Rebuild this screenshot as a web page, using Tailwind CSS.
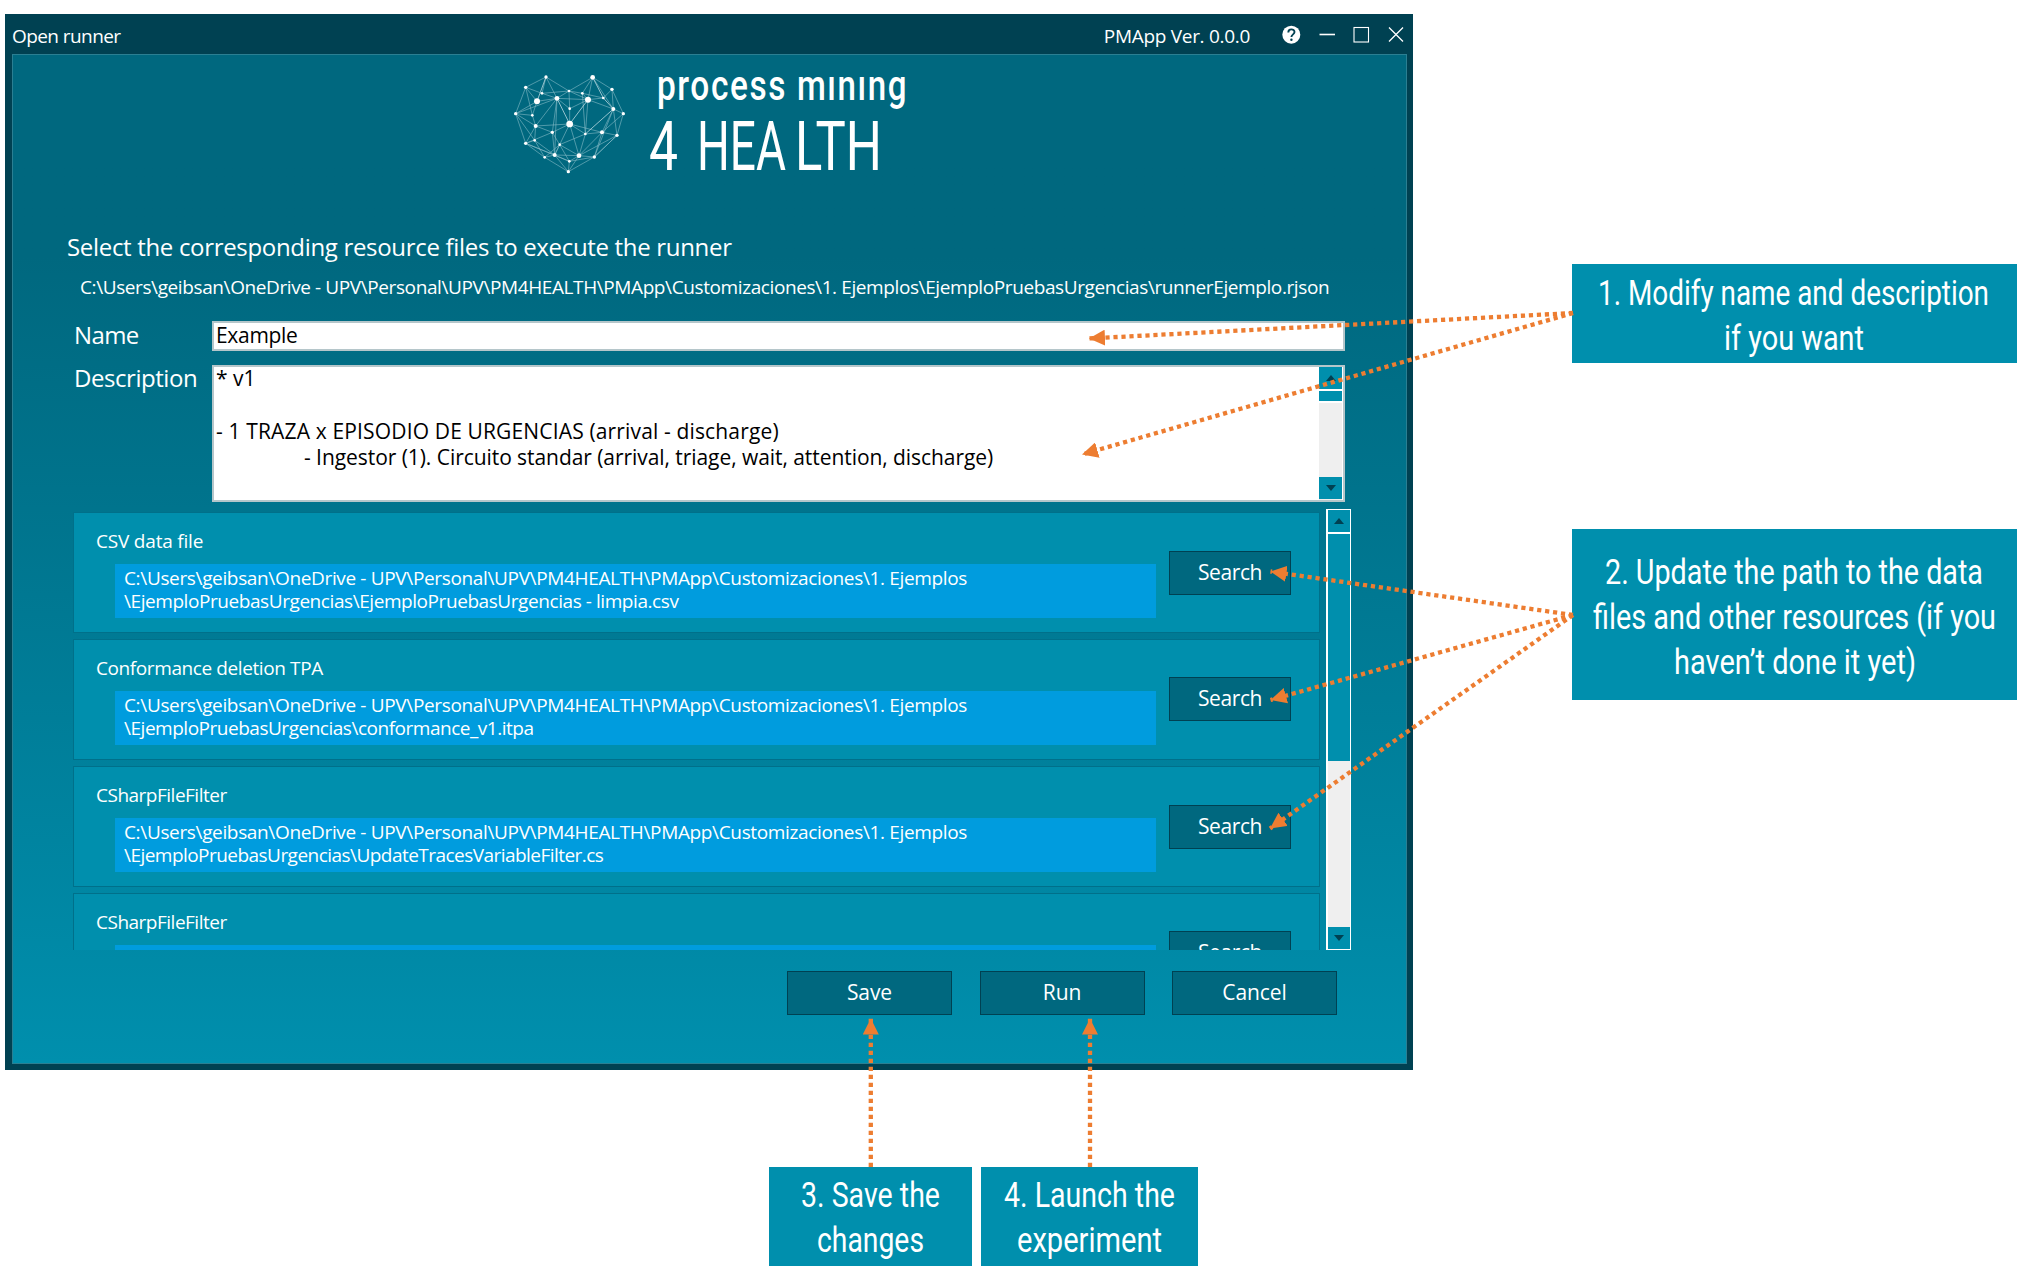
<!DOCTYPE html>
<html lang="en">
<head>
<meta charset="utf-8">
<title>Open runner</title>
<script src="https://cdn.jsdelivr.net/npm/@tailwindcss/browser@4"></script>
</head>
<body class="relative flex h-[1275px] w-[2025px] overflow-hidden bg-white font-['Open_Sans','Noto_Sans',sans-serif] text-white">

<div class="w-[1413px] shrink-0 pl-[5px] pt-[14px]">
  <!-- Application window -->
  <section class="h-[1056px] w-[1408px] bg-[#004152] px-[7px]">
    <header class="flex h-[40px] items-center whitespace-nowrap pt-[4px] text-[19px]">
      <h1 class="tracking-[-0.57px]">Open runner</h1>
      <span class="ml-auto tracking-[-0.3px]">PMApp Ver. 0.0.0</span>
      <svg class="-mr-[1px] -mt-[4px] ml-[29px] h-[40px] w-[128px]" viewBox="1279 14 128 40" fill="none" stroke="#fff">
        <circle cx="1291.300" cy="34.700" r="9" fill="#fff" stroke="none"/>
        <path d="M1288.300 32.400c0-4 6.200-4 6.200-.3 0 2.300-3.100 2.300-3.100 5" stroke="#004152" stroke-width="1.900"/>
        <circle cx="1291.400" cy="39.700" r="1.200" fill="#004152" stroke="none"/>
        <path d="M1319.500 34.500h15.500" stroke-width="1.600"/>
        <rect x="1354" y="27.500" width="14.500" height="14.500" stroke-width="1.100"/>
        <path d="M1389 27.500l14 14M1403 27.500l-14 14" stroke-width="1.300"/>
      </svg>
    </header>

    <main class="h-[1010px] w-[1395px] border border-[#2b7f92] bg-linear-to-b from-[#00687f] from-20% to-[#008fad]">
      <!-- Logo -->
      <svg class="block h-[176px] w-[1393px]" viewBox="13 55 1393 176" fill="#fff">
        <g transform="translate(505 65) scale(.33333)">
          <path fill="none" stroke="#8fc0cb" stroke-opacity=".65" stroke-width="2.600" d="M123 36L62 67L32 146L62 235L119 277L190 320L268 276L336 211L355 146L321 73L263 37L192 78ZM123 36L111 85M123 36L156 100M62 67L111 85M62 67L96 109M62 67L82 151M111 85L192 78M96 109L156 100L192 78L249 104L232 85L263 37M111 85L156 100M96 109L32 146L156 100M232 85L192 78L194 131L156 100L249 104L194 131L194 177M263 37L249 104L295 99L321 73M263 37L325 132M232 85L295 99M321 73L325 132L355 146M249 104L325 132M249 104L241 207M232 85L241 207M96 109L82 151L92 183L156 100M32 146L82 151M32 146L92 183L62 235M32 146L89 226M156 100L142 202L194 177L92 183L89 226L62 235L142 202L92 183M156 100L149 270M194 177L149 270L142 202M194 177L222 272M194 177L291 202L355 146M194 177L241 207M325 132L291 202L336 211L325 132M241 207L164 239L142 202M241 207L291 202L268 276M241 207L222 272L291 202M164 239L149 270L222 272L336 211M222 272L164 239M119 277L149 270L62 235M119 277L89 226L149 270L193 289L222 272L268 276L193 289L190 320L149 270M190 320L222 272M164 239L193 289M119 277L164 239M336 211L268 276L325 132M62 235L193 289"/>
          <path fill="none" stroke="#b9d8df" stroke-width="3" stroke-opacity=".8" d="M123 36L96 109M156 100L194 177L249 104M263 37L295 99L325 132L241 207"/>
          <circle cx="123" cy="36" r="5"/><circle cx="62" cy="67" r="5"/><circle cx="263" cy="37" r="7"/><circle cx="321" cy="73" r="5"/><circle cx="192" cy="78" r="4"/><circle cx="111" cy="85" r="4"/><circle cx="96" cy="109" r="9"/><circle cx="156" cy="100" r="7"/><circle cx="232" cy="85" r="4"/><circle cx="249" cy="104" r="9"/><circle cx="295" cy="99" r="4"/><circle cx="325" cy="132" r="6"/><circle cx="355" cy="146" r="5"/><circle cx="32" cy="146" r="5"/><circle cx="82" cy="151" r="4"/><circle cx="194" cy="131" r="4"/><circle cx="194" cy="177" r="10"/><circle cx="92" cy="183" r="6"/><circle cx="142" cy="202" r="5"/><circle cx="241" cy="207" r="4"/><circle cx="291" cy="202" r="6"/><circle cx="336" cy="211" r="5"/><circle cx="62" cy="235" r="5"/><circle cx="89" cy="226" r="4"/><circle cx="164" cy="239" r="4"/><circle cx="149" cy="270" r="6"/><circle cx="222" cy="272" r="7"/><circle cx="268" cy="276" r="5"/><circle cx="119" cy="277" r="4"/><circle cx="193" cy="289" r="4"/><circle cx="190" cy="320" r="5"/>
        </g>
        <g class="font-[Roboto,sans-serif]">
          <text class="text-[42px] font-medium" x="657" y="100" textLength="130" letter-spacing="2" lengthAdjust="spacingAndGlyphs">process</text>
          <text class="text-[42px] font-medium" x="797" y="100" textLength="111" letter-spacing="2" lengthAdjust="spacingAndGlyphs">mınıng</text>
          <text class="text-[69px]" x="649" y="170" textLength="29" lengthAdjust="spacingAndGlyphs">4</text>
          <text class="text-[69px]" x="697" y="170" textLength="89" lengthAdjust="spacingAndGlyphs">HEA</text>
          <text class="text-[69px]" x="795" y="170" textLength="87" lengthAdjust="spacingAndGlyphs">LTH</text>
        </g>
      </svg>

      <h2 class="pl-[54px] text-2xl leading-8 tracking-[-0.32px]">Select the corresponding resource files to execute the runner</h2>
      <p class="mt-[11px] whitespace-nowrap pl-[67px] text-[19px] leading-[26px] tracking-[-0.4px]">C:\Users\geibsan\OneDrive - UPV\Personal\UPV\PM4HEALTH\PMApp\Customizaciones\1. Ejemplos\EjemploPruebasUrgencias\runnerEjemplo.rjson</p>

      <div class="mt-[21px] flex h-[30px] pl-[60px] text-black">
        <label class="-mt-[2px] w-[139px] pl-[1px] text-2xl leading-8 tracking-[-0.6px] text-white">Name</label>
        <div class="w-[1133px] border-2 border-[#b5c6ca] bg-white pl-[2px] text-[21px] leading-[24px] tracking-[-0.3px]">Example</div>
      </div>
      <div class="mt-[14px] flex h-[137px] pl-[60px] text-black">
        <label class="-mt-[3px] w-[139px] pl-[1px] text-2xl leading-8 tracking-[-0.45px] text-white">Description</label>
        <div class="flex w-[1133px] border-2 border-[#b5c6ca] bg-white">
          <div class="-mt-[2px] flex-1 whitespace-nowrap pl-[2px] text-[21px] leading-[26.3px]">
            <p>* v1</p>
            <p>&nbsp;</p>
            <p class="tracking-[0.15px]">- 1 TRAZA x EPISODIO DE URGENCIAS (arrival - discharge)</p>
            <p class="pl-[88px] tracking-[-0.06px]">- Ingestor (1). Circuito standar (arrival, triage, wait, attention, discharge)</p>
          </div>
          <div class="mr-px flex w-[23px] flex-col bg-[#efefef]">
            <div class="flex h-[22px] items-center justify-center bg-[#008fad]"><svg class="h-[6px] w-[10px]" viewBox="0 0 10 6"><path d="M0 6L5 0l5 6z" fill="#004152"/></svg></div>
            <div class="h-[14px] border-y-2 border-white bg-[#008fad]"></div>
            <div class="mb-px mt-auto flex h-[22px] items-center justify-center bg-[#008fad]"><svg class="h-[6px] w-[10px]" viewBox="0 0 10 6"><path d="M0 0L5 6l5-6z" fill="#004152"/></svg></div>
          </div>
        </div>
      </div>

      <!-- Resource list -->
      <div class="mt-[7px] flex h-[441px] pl-[60px]">
        <div class="flex w-[1247px] flex-col gap-[6px] overflow-hidden pt-[3px] text-[19px]">
          <article class="flex h-[121px] shrink-0 border border-[#00708a] bg-[#008fad]">
            <div class="w-[1082px] pt-[15px]">
              <h3 class="pl-[22px] leading-[26px] tracking-[-0.2px]">CSV data file</h3>
              <div class="ml-[41px] mt-[10px] h-[54px] whitespace-nowrap bg-[#009cde] pl-[9px] pt-[3px] leading-[23.3px]">
                <p class="tracking-[-0.35px]">C:\Users\geibsan\OneDrive - UPV\Personal\UPV\PM4HEALTH\PMApp\Customizaciones\1. Ejemplos</p>
                <p class="tracking-[-0.43px]">\EjemploPruebasUrgencias\EjemploPruebasUrgencias - limpia.csv</p>
              </div>
            </div>
            <button class="ml-[13px] mt-[38px] h-[44px] w-[122px] border border-[#004152] bg-[#00687f] pb-px text-[21px] leading-none tracking-[-0.4px]">Search</button>
          </article>
          <article class="flex h-[121px] shrink-0 border border-[#00708a] bg-[#008fad]">
            <div class="w-[1082px] pt-[15px]">
              <h3 class="pl-[22px] leading-[26px] tracking-[-0.4px]">Conformance deletion TPA</h3>
              <div class="ml-[41px] mt-[10px] h-[54px] whitespace-nowrap bg-[#009cde] pl-[9px] pt-[3px] leading-[23.3px]">
                <p class="tracking-[-0.35px]">C:\Users\geibsan\OneDrive - UPV\Personal\UPV\PM4HEALTH\PMApp\Customizaciones\1. Ejemplos</p>
                <p class="tracking-[-0.48px]">\EjemploPruebasUrgencias\conformance_v1.itpa</p>
              </div>
            </div>
            <button class="ml-[13px] mt-[37px] h-[44px] w-[122px] border border-[#004152] bg-[#00687f] pb-px text-[21px] leading-none tracking-[-0.4px]">Search</button>
          </article>
          <article class="flex h-[121px] shrink-0 border border-[#00708a] bg-[#008fad]">
            <div class="w-[1082px] pt-[15px]">
              <h3 class="pl-[22px] leading-[26px] tracking-[-0.5px]">CSharpFileFilter</h3>
              <div class="ml-[41px] mt-[10px] h-[54px] whitespace-nowrap bg-[#009cde] pl-[9px] pt-[3px] leading-[23.3px]">
                <p class="tracking-[-0.35px]">C:\Users\geibsan\OneDrive - UPV\Personal\UPV\PM4HEALTH\PMApp\Customizaciones\1. Ejemplos</p>
                <p class="tracking-[-0.54px]">\EjemploPruebasUrgencias\UpdateTracesVariableFilter.cs</p>
              </div>
            </div>
            <button class="ml-[13px] mt-[38px] h-[44px] w-[122px] border border-[#004152] bg-[#00687f] pb-px text-[21px] leading-none tracking-[-0.4px]">Search</button>
          </article>
          <article class="flex h-[121px] shrink-0 border border-[#00708a] bg-[#008fad]">
            <div class="w-[1082px] pt-[15px]">
              <h3 class="pl-[22px] leading-[26px] tracking-[-0.5px]">CSharpFileFilter</h3>
              <div class="ml-[41px] mt-[10px] h-[54px] bg-[#009cde]"></div>
            </div>
            <button class="ml-[13px] mt-[37px] h-[44px] w-[122px] border border-[#004152] bg-[#00687f] pb-px text-[21px] leading-none tracking-[-0.4px]">Search</button>
          </article>
        </div>
        <div class="ml-[6px] flex w-[25px] flex-col border border-l-2 border-white bg-[#efefef]">
          <div class="flex h-[22px] items-center justify-center bg-[#008fad]"><svg class="h-[6px] w-[10px]" viewBox="0 0 10 6"><path d="M0 6L5 0l5 6z" fill="#004152"/></svg></div>
          <div class="h-[229px] border-t-2 border-white bg-[#008fad]"></div>
          <div class="mt-auto flex h-[22px] items-center justify-center bg-[#008fad]"><svg class="h-[6px] w-[10px]" viewBox="0 0 10 6"><path d="M0 0L5 6l5-6z" fill="#004152"/></svg></div>
        </div>
      </div>

      <div class="mt-[21px] flex justify-end gap-[27.5px] pr-[69px] text-[21px] leading-none">
        <button class="h-[44px] w-[165px] border border-[#004152] bg-[#00687f] pb-px tracking-[-0.1px]">Save</button>
        <button class="h-[44px] w-[165px] border border-[#004152] bg-[#00687f] pb-px tracking-[-0.1px]">Run</button>
        <button class="h-[44px] w-[165px] border border-[#004152] bg-[#00687f] pb-px tracking-[-0.1px]">Cancel</button>
      </div>
    </main>
  </section>

  <!-- Steps under the window -->
  <div class="mt-[97px] flex gap-[9px] pl-[764px]">
    <svg class="h-[99px] w-[203px] bg-[#008fad] font-[Roboto,sans-serif] text-[35px]" viewBox="769 1167 203 99" fill="#fff">
      <text x="801" y="1207" textLength="139" lengthAdjust="spacingAndGlyphs">3. Save the</text>
      <text x="817" y="1252" textLength="107" lengthAdjust="spacingAndGlyphs">changes</text>
    </svg>
    <svg class="h-[99px] w-[217px] bg-[#008fad] font-[Roboto,sans-serif] text-[35px]" viewBox="981 1167 217 99" fill="#fff">
      <text x="1004" y="1207" textLength="171" lengthAdjust="spacingAndGlyphs">4. Launch the</text>
      <text x="1017" y="1252" textLength="145" lengthAdjust="spacingAndGlyphs">experiment</text>
    </svg>
  </div>
</div>

<!-- Steps beside the window -->
<div class="ml-[159px] flex w-[445px] shrink-0 flex-col gap-[166px] pt-[264px]">
  <svg class="h-[99px] w-[445px] bg-[#008fad] font-[Roboto,sans-serif] text-[35px]" viewBox="1572 264 445 99" fill="#fff">
    <text x="1598" y="305" textLength="391" lengthAdjust="spacingAndGlyphs">1. Modify name and description</text>
    <text x="1724" y="350" textLength="140" lengthAdjust="spacingAndGlyphs">if you want</text>
  </svg>
  <svg class="h-[171px] w-[445px] bg-[#008fad] font-[Roboto,sans-serif] text-[35px]" viewBox="1572 529 445 171" fill="#fff">
    <text x="1605" y="584" textLength="378" lengthAdjust="spacingAndGlyphs">2. Update the path to the data</text>
    <text x="1593" y="629" textLength="403" lengthAdjust="spacingAndGlyphs">files and other resources (if you</text>
    <text x="1674" y="674" textLength="242" lengthAdjust="spacingAndGlyphs">haven’t done it yet)</text>
  </svg>
</div>

<!-- Connector arrows laid over the window -->
<svg class="pointer-events-none absolute left-0 top-0 h-[1275px] w-[2025px]" viewBox="0 0 2025 1275" fill="none" stroke="#ed7d31" stroke-width="4.300" stroke-dasharray="4.200 3.800">
  <defs>
    <marker id="tip" markerUnits="userSpaceOnUse" markerWidth="16" markerHeight="16" refX="16" refY="8" orient="auto"><path d="M0 0L16 8L0 16z" fill="#ed7d31" stroke="none"/></marker>
  </defs>
  <path d="M1573 313L1089 338.500" marker-end="url(#tip)"/>
  <path d="M1573 313L1082 454.500" marker-end="url(#tip)"/>
  <path d="M1573 615L1270.500 571.500" marker-end="url(#tip)"/>
  <path d="M1573 615L1270.500 700" marker-end="url(#tip)"/>
  <path d="M1573 615L1270 828.500" marker-end="url(#tip)"/>
  <path d="M870.800 1167V1018.500" marker-end="url(#tip)"/>
  <path d="M1090 1167V1018.500" marker-end="url(#tip)"/>
</svg>
</body>
</html>
